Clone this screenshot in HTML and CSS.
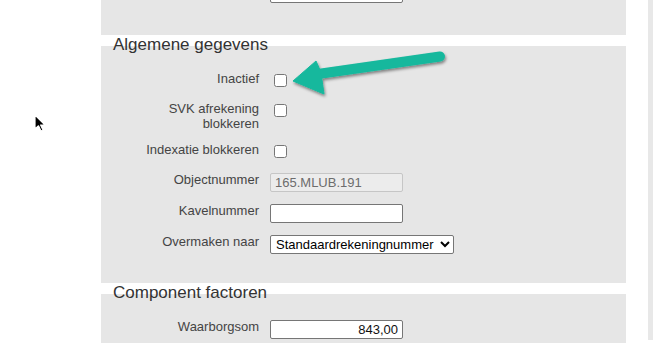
FILE: index.html
```html
<!DOCTYPE html>
<html lang="nl">
<head>
    <meta charset="UTF-8">
    <meta name="viewport" content="width=device-width, initial-scale=1.0">
    <title>Object gegevens</title>
    <link rel="stylesheet" href="styles.css">
</head>
<body>
    <div class="page">
        <div class="form">
            <div class="panel panel-top">
                <div class="rows">
                    <div class="row">
                        <label class="label"></label>
                        <input type="text" class="field">
                    </div>
                </div>
            </div>

            <section class="panel">
                <h2 class="panel-title">Algemene gegevens</h2>
                <div class="rows">
                    <div class="row">
                        <label class="label" for="inactief">Inactief</label>
                        <input type="checkbox" id="inactief">
                    </div>
                    <div class="row">
                        <label class="label" for="svk">SVK afrekening blokkeren</label>
                        <input type="checkbox" id="svk">
                    </div>
                    <div class="row">
                        <label class="label" for="indexatie">Indexatie blokkeren</label>
                        <input type="checkbox" id="indexatie">
                    </div>
                    <div class="row">
                        <label class="label" for="objectnummer">Objectnummer</label>
                        <input type="text" id="objectnummer" class="field" value="165.MLUB.191" disabled>
                    </div>
                    <div class="row">
                        <label class="label" for="kavelnummer">Kavelnummer</label>
                        <input type="text" id="kavelnummer" class="field">
                    </div>
                    <div class="row">
                        <label class="label" for="overmaken">Overmaken naar</label>
                        <select id="overmaken" class="field-select">
                            <option>Standaardrekeningnummer</option>
                        </select>
                    </div>
                </div>
            </section>

            <section class="panel">
                <h2 class="panel-title">Component factoren</h2>
                <div class="rows">
                    <div class="row">
                        <label class="label" for="waarborgsom">Waarborgsom</label>
                        <input type="text" id="waarborgsom" class="field field-number" value="843,00">
                    </div>
                </div>
            </section>
        </div>
        <div class="scrollbar"></div>
    </div>

    <!-- annotation arrow -->
    <svg class="arrow" width="653" height="343" viewBox="0 0 653 343">
        <defs>
            <filter id="shadow" x="-10%" y="-30%" width="120%" height="160%">
                <feDropShadow dx="1" dy="2" stdDeviation="1.5" flood-color="#000" flood-opacity="0.45"/>
            </filter>
        </defs>
        <g fill="#14b89d" stroke="#14b89d" filter="url(#shadow)">
            <line x1="318" y1="74" x2="440" y2="56.5" stroke-width="10" stroke-linecap="round"/>
            <polygon points="293,81 316,61 320,70 322,80 324,94" stroke-width="1" stroke-linejoin="round"/>
        </g>
    </svg>

    <!-- mouse pointer -->
    <svg class="cursor" width="14" height="20" viewBox="0 0 14 20">
        <path d="M1 1 L1 15 L4.5 11.8 L7 17 L9 16 L6.6 11 L11 11 Z" fill="#000" stroke="#fff" stroke-width="1.2" stroke-linejoin="round"/>
    </svg>
</body>
</html>
```

FILE: styles.css
```css
body {
    margin: 0;
    overflow: hidden;
    background-color: #fff;
    font-family: "Liberation Sans", Arial, sans-serif;
    color: #444;
}
.page {
    display: flex;
    height: 343px;
}
.form {
    display: flex;
    flex-direction: column;
    gap: 11px;
    width: 525px;
    margin-left: 101px;
    margin-top: -17px;
}
.panel {
    display: flex;
    flex-direction: column;
    background-color: #e6e6e6;
    padding-bottom: 29px;
}
.panel-top {
    padding-bottom: 32px;
}
.panel-title {
    margin: -11px 0 0 12px;
    font-size: 17px;
    line-height: 20px;
    font-weight: normal;
    color: #333;
}
.rows {
    display: flex;
    flex-direction: column;
    gap: 11px;
    margin-top: 16px;
}
.panel-top .rows {
    margin-top: 0;
}
.row {
    display: grid;
    grid-template-columns: 158px auto;
    column-gap: 11px;
    align-items: start;
    justify-items: start;
}
.label {
    justify-self: end;
    max-width: 120px;
    text-align: right;
    font-size: 13px;
    line-height: 15px;
    color: #444;
}
input[type="checkbox"] {
    width: 13px;
    height: 13px;
    margin: 3px 3px 3px 4px;
}
.field {
    box-sizing: border-box;
    width: 133px;
    height: 19px;
    margin: 1px 0 0;
    padding: 0 4px;
    border: 1px solid #767676;
    border-radius: 2px;
    background-color: #fff;
    font-family: "Liberation Sans", Arial, sans-serif;
    font-size: 13px;
    color: #000;
}
.field:disabled {
    background-color: #ececec;
    border-color: #c6c6c6;
    color: #6d6d6d;
}
.field-number {
    text-align: right;
    color: #111;
}
.field-select {
    box-sizing: border-box;
    width: 184px;
    height: 19px;
    margin: 1px 0 0;
    padding: 0 0 0 1px;
    border: 1px solid #767676;
    border-radius: 2px;
    background-color: #fff;
    font-family: "Liberation Sans", Arial, sans-serif;
    font-size: 13px;
    color: #000;
}
.scrollbar {
    margin-left: auto;
    width: 5px;
    height: 340px;
    background-color: #e8e8e8;
}
.arrow {
    position: absolute;
    left: 0;
    top: 0;
    pointer-events: none;
}
.cursor {
    position: absolute;
    left: 34px;
    top: 114px;
}
```
